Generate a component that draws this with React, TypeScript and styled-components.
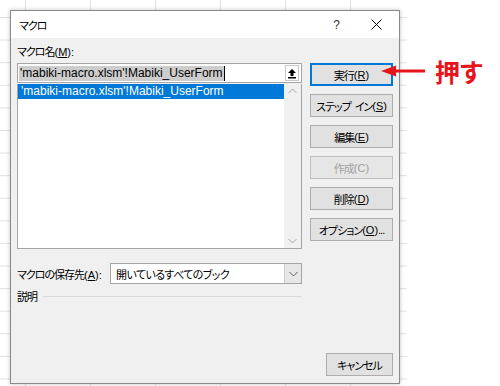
import styled, { createGlobalStyle, css } from 'styled-components';

const GlobalStyle = createGlobalStyle`
    body {
        margin: 0;
        background: #ffffff;
        font-family: "Liberation Sans", "Noto Sans CJK JP", sans-serif;
        font-feature-settings: "palt";
        font-size: 11px;
        letter-spacing: -1px;
        color: #000;
    }
`;

/* ---------- página / planilha ---------- */
const Page = styled.div`
    position: relative;
    width: 500px;
    height: 386px;
    overflow: hidden;
`;

const Sheet = styled.div`
    box-sizing: border-box;
    width: 407px;
    height: 386px;
    padding: 10px 0 0 10px;
    background-color: #fff;
    background-image:
        linear-gradient(to right, #e2e2e2 1px, transparent 1px),
        linear-gradient(to bottom, #e2e2e2 1px, transparent 1px);
    background-size: 65px 22.6px;
    background-position: 25px 17px;
`;

/* ---------- janela ---------- */
const Dialog = styled.div`
    box-sizing: border-box;
    width: 390px;
    height: 374px;
    border: 1px solid #8a8a8a;
    background: #f0f0f0;
    box-shadow: 0 0 4px rgba(0, 0, 0, 0.25);
    display: flex;
    flex-direction: column;
`;

const TitleBar = styled.div`
    height: 27px;
    background: #fff;
    display: flex;
    align-items: center;
`;

const Title = styled.div`
    flex: 1;
    padding-left: 8px;
`;

const TitleButton = styled.div<{ $w: number }>`
    width: ${p => p.$w}px;
    height: 27px;
    display: flex;
    align-items: center;
    justify-content: center;
    font-size: 12px;
    color: #333;
`;

const Body = styled.div`
    flex: 1;
    display: flex;
    gap: 8px;
    padding: 7px 6px 7px 6px;
`;

const LeftColumn = styled.div`
    width: 285px;
    display: flex;
    flex-direction: column;
`;

const FieldLabel = styled.div`
    height: 14px;
    line-height: 14px;
    margin-bottom: 4px;
`;

/* tecla de atalho: "(M)" com espaçamento normal */
const KeyWrap = styled.span`
    letter-spacing: 0;
`;

const U = styled.span`
    text-decoration: underline;
`;

const Key = ({ k, plain }: { k: string; plain?: boolean }) => (
    <KeyWrap>({plain ? k : <U>{k}</U>})</KeyWrap>
);

/* texto latino com métricas de Arial */
const MacroName = styled.span`
    font-size: 12px;
    letter-spacing: 0;
`;

/* ---------- campo de referência ---------- */
const RefInput = styled.div`
    box-sizing: border-box;
    height: 20px;
    border: 1px solid #a5a5a5;
    background: #fff;
    display: flex;
    align-items: center;
    padding-left: 1px;
`;

const SelectedText = styled.span`
    background: #cdcdcd;
    line-height: 15px;
    padding: 0 1px;
`;

const Caret = styled.span`
    width: 1px;
    height: 15px;
    background: #000;
`;

const CollapseButton = styled.div`
    box-sizing: border-box;
    margin-left: auto;
    margin-right: 2px;
    width: 14px;
    height: 16px;
    border: 1px solid #c8c8c8;
    background: #fff;
    display: flex;
    align-items: center;
    justify-content: center;
`;

/* ---------- lista ---------- */
const MacroList = styled.div`
    box-sizing: border-box;
    height: 165px;
    margin-top: 1px;
    border: 1px solid #a5a5a5;
    border-top: none;
    background: #fff;
    display: flex;
`;

const ListItems = styled.div`
    flex: 1;
`;

const ListRow = styled.div<{ $selected?: boolean }>`
    height: 15px;
    line-height: 15px;
    padding-left: 3px;
    ${p => p.$selected && css`
        background: #0078d7;
        color: #fff;
    `}
`;

const ScrollBar = styled.div`
    width: 17px;
    background: #f0f0f0;
    display: flex;
    flex-direction: column;
    justify-content: space-between;
    align-items: center;
    padding: 4px 0;
`;

/* ---------- destino ---------- */
const StorageRow = styled.div`
    margin-top: 14px;
    height: 21px;
    display: flex;
    align-items: center;
    justify-content: space-between;
    white-space: nowrap;
`;

const Select = styled.div`
    box-sizing: border-box;
    width: 192px;
    height: 21px;
    border: 1px solid #a5a5a5;
    background: #fff;
    display: flex;
    align-items: center;
`;

const SelectValue = styled.div`
    flex: 1;
    padding-left: 5px;
    letter-spacing: -0.6px;
`;

const DropButton = styled.div`
    width: 16px;
    height: 19px;
    background: #e6e6e6;
    border-left: 1px solid #cfcfcf;
    display: flex;
    align-items: center;
    justify-content: center;
`;

const Description = styled.div`
    margin-top: 5px;
    display: flex;
    align-items: center;
    gap: 6px;
    height: 14px;
`;

const Divider = styled.div`
    flex: 1;
    height: 1px;
    background: #d9d9d9;
`;

/* ---------- botões ---------- */
const ButtonColumn = styled.div`
    width: 83px;
    display: flex;
    flex-direction: column;
    gap: 8px;
    padding-top: 18px;
`;

const DialogButton = styled.div<{ $default?: boolean; $disabled?: boolean; $bottom?: boolean; $w?: number }>`
    box-sizing: border-box;
    height: 23px;
    width: ${p => p.$w ?? 83}px;
    border: 1px solid #adadad;
    background: #e1e1e1;
    display: flex;
    align-items: center;
    justify-content: center;
    white-space: pre;
    ${p => p.$default && css`
        border-color: #0078d7;
        box-shadow: inset 0 0 0 1px #0078d7;
    `}
    ${p => p.$disabled && css`
        color: #a0a0a0;
        border-color: #bfbfbf;
        background: #e6e6e6;
    `}
    ${p => p.$bottom && css`
        margin-top: auto;
        align-self: flex-end;
    `}
`;

/* ---------- anotação ---------- */
const Annotation = styled.div`
    position: absolute;
    left: 381px;
    top: 56px;
    display: flex;
    align-items: center;
    gap: 9px;
`;

const PushLabel = styled.div`
    color: #e8141c;
    font-family: "Noto Sans CJK JP", sans-serif;
    font-weight: 700;
    font-size: 25px;
    line-height: 30px;
    letter-spacing: 0;
`;

const Chevron = ({ up }: { up?: boolean }) => (
    <svg width="9" height="6" viewBox="0 0 9 6">
        <path d={up ? 'M0.5 5 L4.5 1 L8.5 5' : 'M0.5 1 L4.5 5 L8.5 1'} fill="none" stroke="#a8a8a8" strokeWidth="1" />
    </svg>
);

export default function App() {
    return (
        <Page>
            <GlobalStyle />
            <Sheet>
                <Dialog>
                    <TitleBar>
                        <Title>マクロ</Title>
                        <TitleButton $w={34}>?</TitleButton>
                        <TitleButton $w={46}>
                            <svg width="11" height="11" viewBox="0 0 11 11">
                                <path d="M0.5 0.5 L10.5 10.5 M10.5 0.5 L0.5 10.5" stroke="#000" strokeWidth="1" />
                            </svg>
                        </TitleButton>
                    </TitleBar>

                    <Body>
                        <LeftColumn>
                            <FieldLabel>マクロ名<Key k="M" />:</FieldLabel>
                            <RefInput>
                                <SelectedText><MacroName>'mabiki-macro.xlsm'!Mabiki_UserForm</MacroName></SelectedText>
                                <Caret />
                                <CollapseButton>
                                    <svg width="10" height="11" viewBox="0 0 10 11">
                                        <path d="M5 1 L9 5 L6.5 5 L6.5 8 L3.5 8 L3.5 5 L1 5 Z" fill="#000" />
                                        <rect x="1" y="9" width="8" height="1.5" fill="#000" />
                                    </svg>
                                </CollapseButton>
                            </RefInput>
                            <MacroList>
                                <ListItems>
                                    <ListRow $selected><MacroName>'mabiki-macro.xlsm'!Mabiki_UserForm</MacroName></ListRow>
                                </ListItems>
                                <ScrollBar>
                                    <Chevron up />
                                    <Chevron />
                                </ScrollBar>
                            </MacroList>

                            <StorageRow>
                                <span>マクロの保存先<Key k="A" />:</span>
                                <Select>
                                    <SelectValue>開いているすべてのブック</SelectValue>
                                    <DropButton>
                                        <svg width="9" height="6" viewBox="0 0 9 6">
                                            <path d="M0.5 1 L4.5 5 L8.5 1" fill="none" stroke="#606060" strokeWidth="1" />
                                        </svg>
                                    </DropButton>
                                </Select>
                            </StorageRow>

                            <Description>
                                <span>説明</span>
                                <Divider />
                            </Description>
                        </LeftColumn>

                        <ButtonColumn>
                            <DialogButton $default>実行<Key k="R" /></DialogButton>
                            <DialogButton>ステップ  イン<Key k="S" /></DialogButton>
                            <DialogButton>編集<Key k="E" /></DialogButton>
                            <DialogButton $disabled>作成<Key k="C" plain /></DialogButton>
                            <DialogButton>削除<Key k="D" /></DialogButton>
                            <DialogButton>オプション<Key k="O" />...</DialogButton>
                            <DialogButton $bottom $w={67}>キャンセル</DialogButton>
                        </ButtonColumn>
                    </Body>
                </Dialog>
            </Sheet>

            <Annotation>
                <svg width="45" height="12" viewBox="0 0 45 12">
                    <path d="M0 6 L15 0.5 L15 11.5 Z" fill="#e8141c" />
                    <rect x="14" y="4.5" width="30" height="3" fill="#e8141c" />
                </svg>
                <PushLabel>押す</PushLabel>
            </Annotation>
        </Page>
    );
}
